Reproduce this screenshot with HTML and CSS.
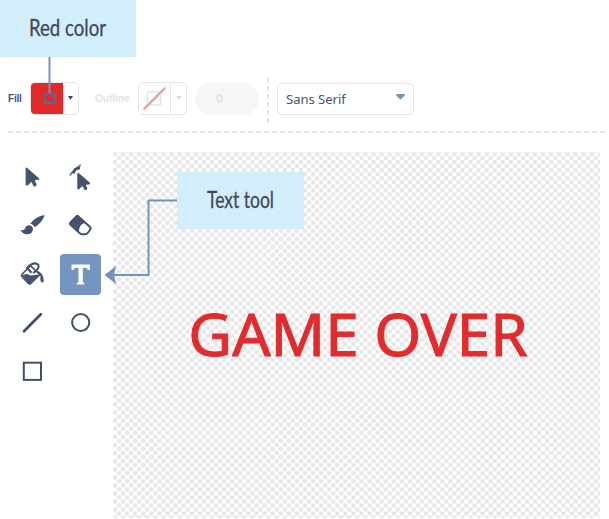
FILE: index.html
```html
<!DOCTYPE html>
<html lang="en">
<head>
<meta charset="utf-8">
<title>Paint editor</title>
<link rel="stylesheet" href="styles.css">
</head>
<body>
<div class="editor">
  <header class="toolbar">
    <span class="label">Fill</span>
    <div class="picker">
      <div class="swatch"></div>
      <div class="drop"><svg width="5" height="4"><path d="M0 0h5L2.5 4z" fill="#3c4a73"/></svg></div>
    </div>
    <span class="label muted outline-label">Outline</span>
    <div class="picker">
      <div class="swatch none"><svg width="32" height="32" viewBox="0 0 32 32"><rect x="8.5" y="9" width="13" height="13" fill="none" stroke="#e4e4e4" stroke-width="1.5"/><path d="M5 26L26 5" stroke="#e5e1e1" stroke-width="3.2" stroke-linecap="round"/><path d="M5 26L26 5" stroke="#ee8587" stroke-width="1.2"/></svg></div>
      <div class="drop"><svg width="6" height="4"><path d="M0 0h6L3 4z" fill="#dcdcdc"/></svg></div>
    </div>
    <div class="width"><span>0</span></div>
    <svg class="divider" width="2" height="46"><path d="M1 1V46" stroke="#e2e2e2" stroke-width="2" stroke-dasharray="5 3"/></svg>
    <div class="select"><span>Sans Serif</span><svg width="9" height="6" viewBox="0 0 9 6"><path d="M.5 0h8q.8 1-.2 2L5.4 5q-.9.8-1.8 0L.7 2Q-.3 1 .5 0z" fill="#7093c0"/></svg></div>
  </header>
  <svg class="rule" width="599" height="2"><path d="M0 1H599" stroke="#e3e3e3" stroke-width="2" stroke-dasharray="5 3"/></svg>
  <main class="work">
    <div class="tools">
      <div class="tool"><svg viewBox="0 0 41 41"><path d="M13.6 11.5Q13.4 10 15 10.8L27.2 21.4Q28 22.8 26.3 22.8L22.8 23.1L24.6 27.8Q24.5 29.8 22.5 29.4L21.3 28.8L19.5 24.7L16 28.2Q14 29.2 13.6 27.3z" class="solid"/></svg></div>
      <div class="tool"><svg viewBox="0 0 41 41"><path d="M18.3 15.7L30.3 26L29.4 27.4L25.8 27.7L27.4 31.4Q27 33.2 24.8 33.2L22.3 29L18.8 32.4Q17.3 32.7 17.3 31.4V16.5z" class="solid"/><path d="M10 17.5L20.5 7.8" stroke="#42506f" stroke-width="1.3"/><path d="M13.4 16.5Q14 10.8 20 11.2" fill="none" stroke="#42506f" stroke-width="2.8"/><path d="M9.5 18h2M20 7.5v2" stroke="#7093c0" stroke-width="1.6"/></svg></div>
      <div class="tool"><svg viewBox="0 0 41 41"><path d="M31.5 10.2Q32.6 9.8 32.2 11.2Q30.4 17 22.7 22.3Q21.8 19.2 18.3 18.4Q24 11.4 31.5 10.2zM17.2 20.3Q21 20.8 21 24.2Q20.5 29.6 14.5 29.3Q10.5 29 8.5 24.7Q11 25.8 12.5 24.4Q14 20.4 17.2 20.3z" class="solid"/></svg></div>
      <div class="tool"><svg viewBox="0 0 41 41"><path d="M10.2 17.8L16.3 11.4Q17.3 10.4 18.4 11.4L29.8 21.8Q31.3 23.3 30 25L27.7 28Q26.8 29.2 25 29.2H21.8Q20.7 29.2 19.8 28.3L10.3 19.6Q9.4 18.7 10.2 17.8z" fill="#fff" stroke="#42506f" stroke-width="2"/><path d="M10 18.5L17.3 10.8L25.2 18Q19.3 18.5 18.8 26.7z" class="solid"/></svg></div>
      <div class="tool"><svg viewBox="0 0 41 41"><path d="M10 20.2L18.6 11.8L28 20.4L18.6 29.7Q17.3 30.3 16.2 29.2L10.2 23Q8.8 21.5 10 20.2z" fill="#fff" stroke="#42506f" stroke-width="1.6"/><path d="M10 21L15 20L18.5 21.5L27.2 20.5L18 29.8L16 29z" class="solid"/><path d="M19.6 18.8L15 14Q22 6.8 26.3 10.8Q28 14.5 21 19" class="line"/><path d="M23.3 16.7Q31.2 16.5 31.8 27.2Q31.2 29.3 29.2 28Q28 26.8 28.5 22.5z" class="solid"/></svg></div>
      <div class="tool active"><svg viewBox="0 0 41 41"><path d="M11.5 10.5H29.8V16H27.8Q27.2 13.7 25.8 13.7H22.8V28Q23 28.8 24.3 28.8V30.5H17V28.8Q18.5 28.8 18.5 28V13.7H15.5Q14 13.7 13.5 16H11.5z" fill="#fff"/></svg></div>
      <div class="tool"><svg viewBox="0 0 41 41"><path d="M12 29.2L28.8 12.2" stroke="#42506f" stroke-width="2.8" stroke-linecap="round"/></svg></div>
      <div class="tool"><svg viewBox="0 0 41 41"><circle cx="20.7" cy="20.5" r="8.6" class="line"/></svg></div>
      <div class="tool"><svg viewBox="0 0 41 41"><rect x="11.8" y="11.7" width="17.2" height="17.2" class="line"/></svg></div>
    </div>
    <div class="canvas">
      <svg width="487" height="366" viewBox="113 152 487 366">
        <defs><pattern id="checker" x="113" y="152" width="8.08" height="8.08" patternUnits="userSpaceOnUse"><path d="M0 0h4.04v4.04H0zM4.04 4.04h4.04v4.04H4.04z" fill="#e6e6e6"/></pattern></defs>
        <rect x="113" y="152" width="487" height="366" rx="3" fill="url(#checker)"/>
        <path d="M115 152.6H597" stroke="#ededed"/>
        <text x="188.3" y="356.3" class="art" textLength="339.5" lengthAdjust="spacingAndGlyphs">GAME OVER</text>
      </svg>
    </div>
  </main>
  <svg class="connectors" width="609" height="519"><path d="M49.5 56V93" class="wire"/><rect x="44.7" y="94" width="10" height="8.8" fill="none" stroke="#55709f" stroke-width="1.6"/><path d="M178 200.5H148.5V275H112" class="wire"/><path d="M104.5 275L116 266L114 275L116 284z" fill="#7093c0"/></svg>
  <div class="callout red"><svg width="136" height="57"><text x="29" y="36" class="hand" textLength="77" lengthAdjust="spacingAndGlyphs">Red color</text></svg></div>
  <div class="callout text"><svg width="127" height="57"><text x="30" y="36" class="hand" textLength="67" lengthAdjust="spacingAndGlyphs">Text tool</text></svg></div>
</div>
</body>
</html>
```
FILE: styles.css
```css
* { box-sizing: border-box; }
body { margin: 0; background: #fff; overflow: hidden; }
svg { display: block; }
.editor { position: relative; width: 609px; height: 519px; overflow: hidden; }
.toolbar { display: flex; align-items: center; height: 131px; padding: 66px 0 0 8px; }
.label { width: 22px; flex: none; font: bold 10px "Liberation Sans", sans-serif; letter-spacing: -.2px; color: #46547b; white-space: nowrap; }
.muted { color: #e2e2e2; }
.outline-label { width: 43px; margin-left: 16px; letter-spacing: 0; }
.picker { display: flex; flex: none; width: 49px; height: 33px; border: 1px solid #e3e3e3; border-radius: 5px; overflow: hidden; }
.swatch { width: 32px; background: #e1292c; }
.none { background: #fff; border-right: 1px solid #e6e6e6; }
.drop { display: flex; flex: 1; align-items: center; justify-content: center; padding-bottom: 2px; }
.width { flex: none; width: 64px; height: 32px; margin-left: 8px; border-radius: 16px; background: #f6f6f6; color: #e2e2e2; font: bold 12px/32px "Liberation Sans", sans-serif; padding-left: 21px; }
.divider { flex: none; margin-left: 8px; margin-top: 2px; }
.select { display: flex; align-items: center; justify-content: space-between; flex: none; width: 137px; height: 32px; margin-left: 8px; padding: 0 8px; border: 1px solid #e3e3e3; border-radius: 5px; font: 13px "Noto Sans", sans-serif; color: #46547b; }
.select svg { margin-top: -4px; }
.rule { margin-left: 8px; }
.work { display: flex; padding: 19px 0 0 12px; }
.tools { display: grid; grid-template-columns: 41px 41px; grid-auto-rows: 41px; gap: 7.6px 7px; align-content: start; width: 101px; padding-top: 4.5px; }
.tool { border-radius: 4px; }
.tool svg { width: 41px; height: 41px; }
.active { background: #7395bf; }
.solid { fill: #46536f; }
.line { fill: none; stroke: #42506f; stroke-width: 2; }
.art { font: 59px "Noto Sans", sans-serif; fill: #e22b2d; stroke: #e22b2d; stroke-width: 1; }
.connectors { position: absolute; left: 0; top: 0; }
.wire { fill: none; stroke: #7093c0; stroke-width: 2; }
.callout { position: absolute; height: 57px; background: #d2eefb; }
.red { left: 0; top: 0; width: 136px; }
.text { left: 177px; top: 172px; width: 127px; }
.hand { font: 23px Lato, sans-serif; fill: #42485c; stroke: #42485c; stroke-width: .3; }
```
